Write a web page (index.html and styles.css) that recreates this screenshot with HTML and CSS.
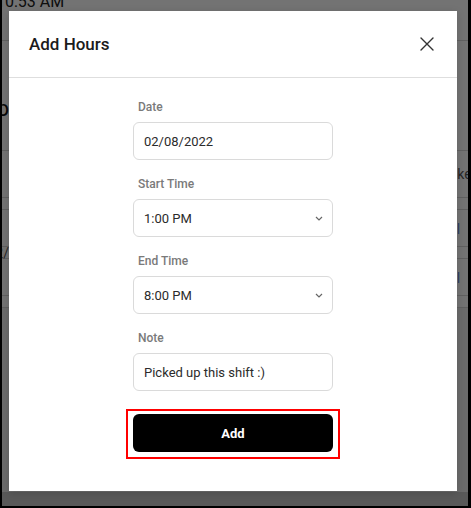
FILE: index.html
```html
<!DOCTYPE html>
<html lang="en">
<head>
<meta charset="utf-8">
<title>Add Hours</title>
<link rel="stylesheet" href="styles.css">
</head>
<body>
<div class="screen">
  <div class="page">
    <div class="topbar"><span class="clock">10:53 AM</span></div>
    <div class="row row-title">
      <div class="cell-left"><span class="heading">Workshop</span></div>
    </div>
    <div class="row row-a">
      <div class="cell-right"><span class="muted shifted">Taken</span></div>
    </div>
    <div class="row row-thin"></div>
    <div class="row row-b">
      <div class="cell-right"><span class="link">|</span></div>
    </div>
    <div class="row row-thin row-slash">
      <div class="cell-left"><span class="muted">02/</span></div>
    </div>
    <div class="row row-b">
      <div class="cell-right"><span class="link">|</span></div>
    </div>
    <div class="row row-thin"></div>
    <div class="footer"></div>
    <div class="bottombar"></div>
  </div>

  <div class="backdrop">
    <div class="modal">
      <div class="modal-header">
        <h2 class="modal-title">Add Hours</h2>
        <button class="close-btn" type="button" aria-label="Close">
          <svg width="14" height="14" viewBox="0 0 14 14" aria-hidden="true">
            <path d="M1 1 L13 13 M13 1 L1 13" stroke="#333" stroke-width="1.4" fill="none" stroke-linecap="round"/>
          </svg>
        </button>
      </div>
      <form class="modal-body">
        <div class="field">
          <label class="field-label">Date</label>
          <input class="control" type="text" value="02/08/2022">
        </div>
        <div class="field">
          <label class="field-label">Start Time</label>
          <div class="select-wrap">
            <select class="control">
              <option>1:00 PM</option>
            </select>
            <svg class="chevron" width="8" height="5" viewBox="0 0 8 5" aria-hidden="true">
              <path d="M1 1 L4 4 L7 1" stroke="#666" stroke-width="1.2" fill="none"/>
            </svg>
          </div>
        </div>
        <div class="field">
          <label class="field-label">End Time</label>
          <div class="select-wrap">
            <select class="control">
              <option>8:00 PM</option>
            </select>
            <svg class="chevron" width="8" height="5" viewBox="0 0 8 5" aria-hidden="true">
              <path d="M1 1 L4 4 L7 1" stroke="#666" stroke-width="1.2" fill="none"/>
            </svg>
          </div>
        </div>
        <div class="field">
          <label class="field-label">Note</label>
          <input class="control" type="text" value="Picked up this shift :)">
        </div>
        <div class="submit-frame">
          <button class="submit-btn" type="button">Add</button>
        </div>
      </form>
    </div>
  </div>
</div>
</body>
</html>
```

FILE: styles.css
```css
* {
  box-sizing: border-box;
}

html, body {
  margin: 0;
  padding: 0;
}

body {
  background: #000;
  width: 471px;
  height: 508px;
  overflow: hidden;
  font-family: Roboto, "Liberation Sans", Arial, sans-serif;
}

.screen {
  position: relative;
  margin: 0 3px 2px 2px;
  height: 506px;
  background: #fff;
  overflow: hidden;
}

/* app page behind the dialog */
.page {
  display: flex;
  flex-direction: column;
  height: 100%;
}

.topbar {
  height: 41px;
  border-bottom: 1px solid #d6d6d6;
  flex: none;
}

.clock {
  display: block;
  margin: -7px 0 0 -6px;
  font-size: 16px;
  line-height: 18px;
  color: #222;
}

.row {
  display: flex;
  justify-content: space-between;
  border-bottom: 1px solid #d6d6d6;
  flex: none;
}

.row-title {
  height: 110px;
  align-items: center;
  padding-top: 26px;
}

.row-a {
  height: 47px;
  align-items: center;
}

.row-thin {
  height: 12px;
}

.row-b {
  height: 37px;
  align-items: center;
}

.row-slash {
  align-items: center;
}

.cell-left {
  width: 7px;
  display: flex;
  justify-content: flex-end;
  white-space: nowrap;
}

.cell-right {
  margin-left: auto;
  width: 11px;
  display: flex;
  justify-content: flex-start;
  white-space: nowrap;
}

.heading {
  font-size: 22px;
  color: #111;
}

.muted {
  font-size: 14px;
  color: #555;
}

.shifted {
  margin-left: -15px;
}

.link {
  font-size: 12px;
  color: #2a6bd1;
}

.footer {
  flex: 1;
  background: #eeeeee;
}

.bottombar {
  height: 14px;
  flex: none;
  background: #c6c6c6;
}

/* dim layer and dialog */
.backdrop {
  position: absolute;
  inset: 0;
  background: rgba(0, 0, 0, 0.55);
  padding: 11px 11px 14px 7px;
  display: flex;
  align-items: flex-start;
}

.modal {
  width: 448px;
  background: #fff;
  box-shadow: 0 2px 8px rgba(0, 0, 0, 0.15);
}

.modal-header {
  display: flex;
  align-items: center;
  justify-content: space-between;
  padding: 21px 18px 21px 20px;
  border-bottom: 1px solid #dedede;
}

.modal-title {
  margin: 0;
  font-size: 17px;
  line-height: 24px;
  font-weight: 500;
  color: #1b1b1b;
}

.close-btn {
  width: 24px;
  height: 24px;
  padding: 0;
  border: 0;
  background: none;
  display: flex;
  align-items: center;
  justify-content: center;
}

.modal-body {
  margin: 0;
  padding: 21px 0 32px;
  display: flex;
  flex-direction: column;
  align-items: center;
  gap: 16px;
}

.field {
  width: 200px;
  display: flex;
  flex-direction: column;
}

.field-label {
  font-size: 12px;
  line-height: 16px;
  font-weight: 500;
  color: #7a7a7a;
  padding-left: 5px;
  margin-bottom: 7px;
}

.control {
  width: 200px;
  height: 38px;
  margin: 0;
  padding: 0 10px;
  border: 1px solid #dadada;
  border-radius: 6px;
  background: #fff;
  font-family: Roboto, "Liberation Sans", Arial, sans-serif;
  font-size: 13px;
  color: #2b2b2b;
  outline: none;
  -webkit-appearance: none;
  appearance: none;
}

.select-wrap {
  position: relative;
}

.chevron {
  position: absolute;
  right: 10px;
  top: 17px;
  pointer-events: none;
}

.submit-frame {
  margin-top: 2px;
  border: 2px solid #f00;
  padding: 3px 5px 5px 5px;
}

.submit-btn {
  display: block;
  width: 200px;
  height: 38px;
  border: 0;
  border-radius: 6px;
  background: #000;
  color: #fff;
  font-family: Roboto, "Liberation Sans", Arial, sans-serif;
  font-size: 13px;
  font-weight: 700;
}
```
